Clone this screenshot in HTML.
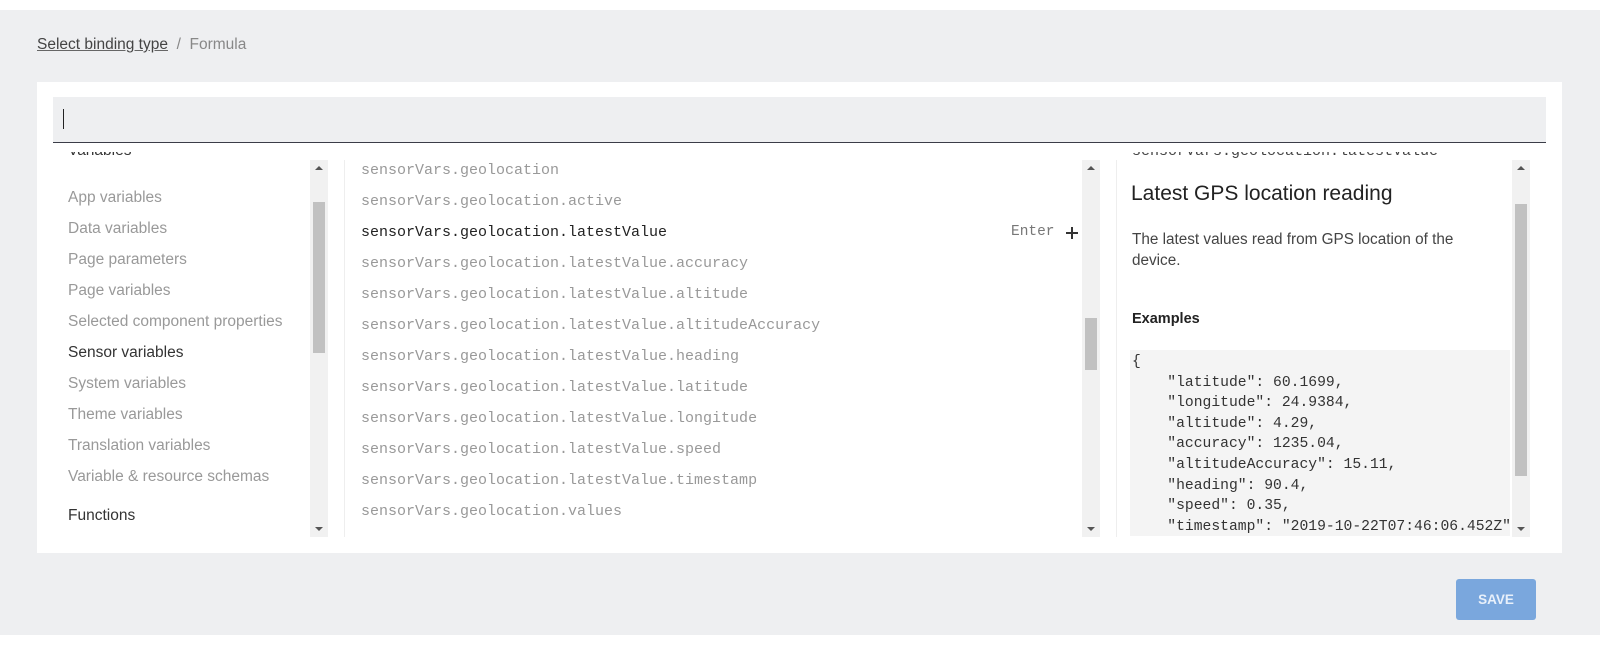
<!DOCTYPE html>
<html><head><meta charset="utf-8"><style>
*{margin:0;padding:0;box-sizing:border-box}
body{width:1600px;height:646px;background:#fff;position:relative;overflow:hidden;font-family:"Liberation Sans",sans-serif}
.bg{position:absolute;left:0;top:10px;width:1600px;height:625px;background:#eeeff1}
.a{position:absolute;white-space:nowrap}
.crumb{left:37px;top:36px;font-size:15.5px;color:#888}
.crumb u{color:#444;text-decoration:underline;text-decoration-color:#666}
.panel{left:37px;top:82px;width:1525px;height:471px;background:#fff}
.input{left:53px;top:97px;width:1493px;height:46px;background:#eeeff1;border-bottom:1px solid #3b3d48}
.caret{left:63px;top:109px;width:1px;height:20px;background:#222}
.left{font-size:15.5px;color:#999;left:68px}
.sb{position:absolute;background:#f1f1f1;width:18px}
.th{position:absolute;background:#c1c1c1;left:3px;width:12px}
.ar{position:absolute;left:5px;width:0;height:0;border-left:4px solid transparent;border-right:4px solid transparent}
.up{top:6px;border-bottom:4px solid #555}
.dn{bottom:6px;border-top:4px solid #555}
.mono{font-family:"Liberation Mono",monospace;font-size:15px}
.mid{left:361px;color:#999}
.code{left:1130px;top:350px;width:380px;height:186px;background:#f4f4f4;overflow:hidden}
.code pre{font-family:"Liberation Mono",monospace;font-size:14.7px;line-height:20.6px;color:#333;padding:2px 0 0 2px}
</style></head><body>
<div class="bg"></div>
<div class="a crumb"><u>Select binding type</u>&nbsp;&nbsp;/&nbsp;&nbsp;Formula</div>
<div class="a panel"></div>
<div class="a input"></div>
<div class="a caret"></div>

<div class="a" style="left:53px;top:152px;width:255px;height:9px;overflow:hidden"><div class="a" style="left:15px;top:-10px;font-size:15.5px;color:#333">Variables</div></div>
<div class="a left" style="top:189px">App variables</div>
<div class="a left" style="top:220px">Data variables</div>
<div class="a left" style="top:251px">Page parameters</div>
<div class="a left" style="top:282px">Page variables</div>
<div class="a left" style="top:313px">Selected component properties</div>
<div class="a left" style="top:344px;color:#333">Sensor variables</div>
<div class="a left" style="top:375px">System variables</div>
<div class="a left" style="top:406px">Theme variables</div>
<div class="a left" style="top:437px">Translation variables</div>
<div class="a left" style="top:468px">Variable &amp; resource schemas</div>
<div class="a left" style="top:507px;color:#333">Functions</div>
<div class="sb" style="left:310px;top:160px;height:377px"><div class="ar up"></div><div class="th" style="top:42px;height:151px"></div><div class="ar dn"></div></div>
<div class="a" style="left:344px;top:160px;width:1px;height:377px;background:#eee"></div>

<div class="a mono mid" style="top:162px">sensorVars.geolocation</div>
<div class="a mono mid" style="top:193px">sensorVars.geolocation.active</div>
<div class="a mono mid" style="top:224px;color:#222">sensorVars.geolocation.latestValue</div>
<div class="a mono mid" style="top:255px">sensorVars.geolocation.latestValue.accuracy</div>
<div class="a mono mid" style="top:286px">sensorVars.geolocation.latestValue.altitude</div>
<div class="a mono mid" style="top:317px">sensorVars.geolocation.latestValue.altitudeAccuracy</div>
<div class="a mono mid" style="top:348px">sensorVars.geolocation.latestValue.heading</div>
<div class="a mono mid" style="top:379px">sensorVars.geolocation.latestValue.latitude</div>
<div class="a mono mid" style="top:410px">sensorVars.geolocation.latestValue.longitude</div>
<div class="a mono mid" style="top:441px">sensorVars.geolocation.latestValue.speed</div>
<div class="a mono mid" style="top:472px">sensorVars.geolocation.latestValue.timestamp</div>
<div class="a mono mid" style="top:503px">sensorVars.geolocation.values</div>
<div class="a mono" style="left:1011px;top:224px;font-size:14.5px;color:#777">Enter</div>
<div class="a" style="left:1066px;top:232px;width:12px;height:2px;background:#333"></div>
<div class="a" style="left:1071px;top:227px;width:2px;height:12px;background:#333"></div>
<div class="sb" style="left:1082px;top:160px;height:377px"><div class="ar up"></div><div class="th" style="top:158px;height:52px"></div><div class="ar dn"></div></div>
<div class="a" style="left:1116px;top:160px;width:1px;height:377px;background:#eee"></div>

<div class="a" style="left:1117px;top:152px;width:392px;height:9px;overflow:hidden"><div class="a mono" style="left:15px;top:-9px;color:#444">sensorVars.geolocation.latestValue</div></div>
<div class="a" style="left:1131px;top:182px;font-size:21px;color:#222">Latest GPS location reading</div>
<div class="a" style="left:1132px;top:229px;font-size:15.3px;color:#444;line-height:21px;white-space:normal;width:350px">The latest values read from GPS location of the device.</div>
<div class="a" style="left:1132px;top:311px;font-size:14.5px;font-weight:bold;color:#222">Examples</div>
<div class="a code"><pre>{
    "latitude": 60.1699,
    "longitude": 24.9384,
    "altitude": 4.29,
    "accuracy": 1235.04,
    "altitudeAccuracy": 15.11,
    "heading": 90.4,
    "speed": 0.35,
    "timestamp": "2019-10-22T07:46:06.452Z"
}</pre></div>
<div class="sb" style="left:1512px;top:160px;height:377px"><div class="ar up"></div><div class="th" style="top:44px;height:272px"></div><div class="ar dn"></div></div>

<div class="a" style="left:1456px;top:579px;width:80px;height:41px;background:#7aa7dd;border-radius:3px;color:#e8f0fa;font-size:13.5px;font-weight:bold;text-align:center;line-height:41px">SAVE</div>
</body></html>
